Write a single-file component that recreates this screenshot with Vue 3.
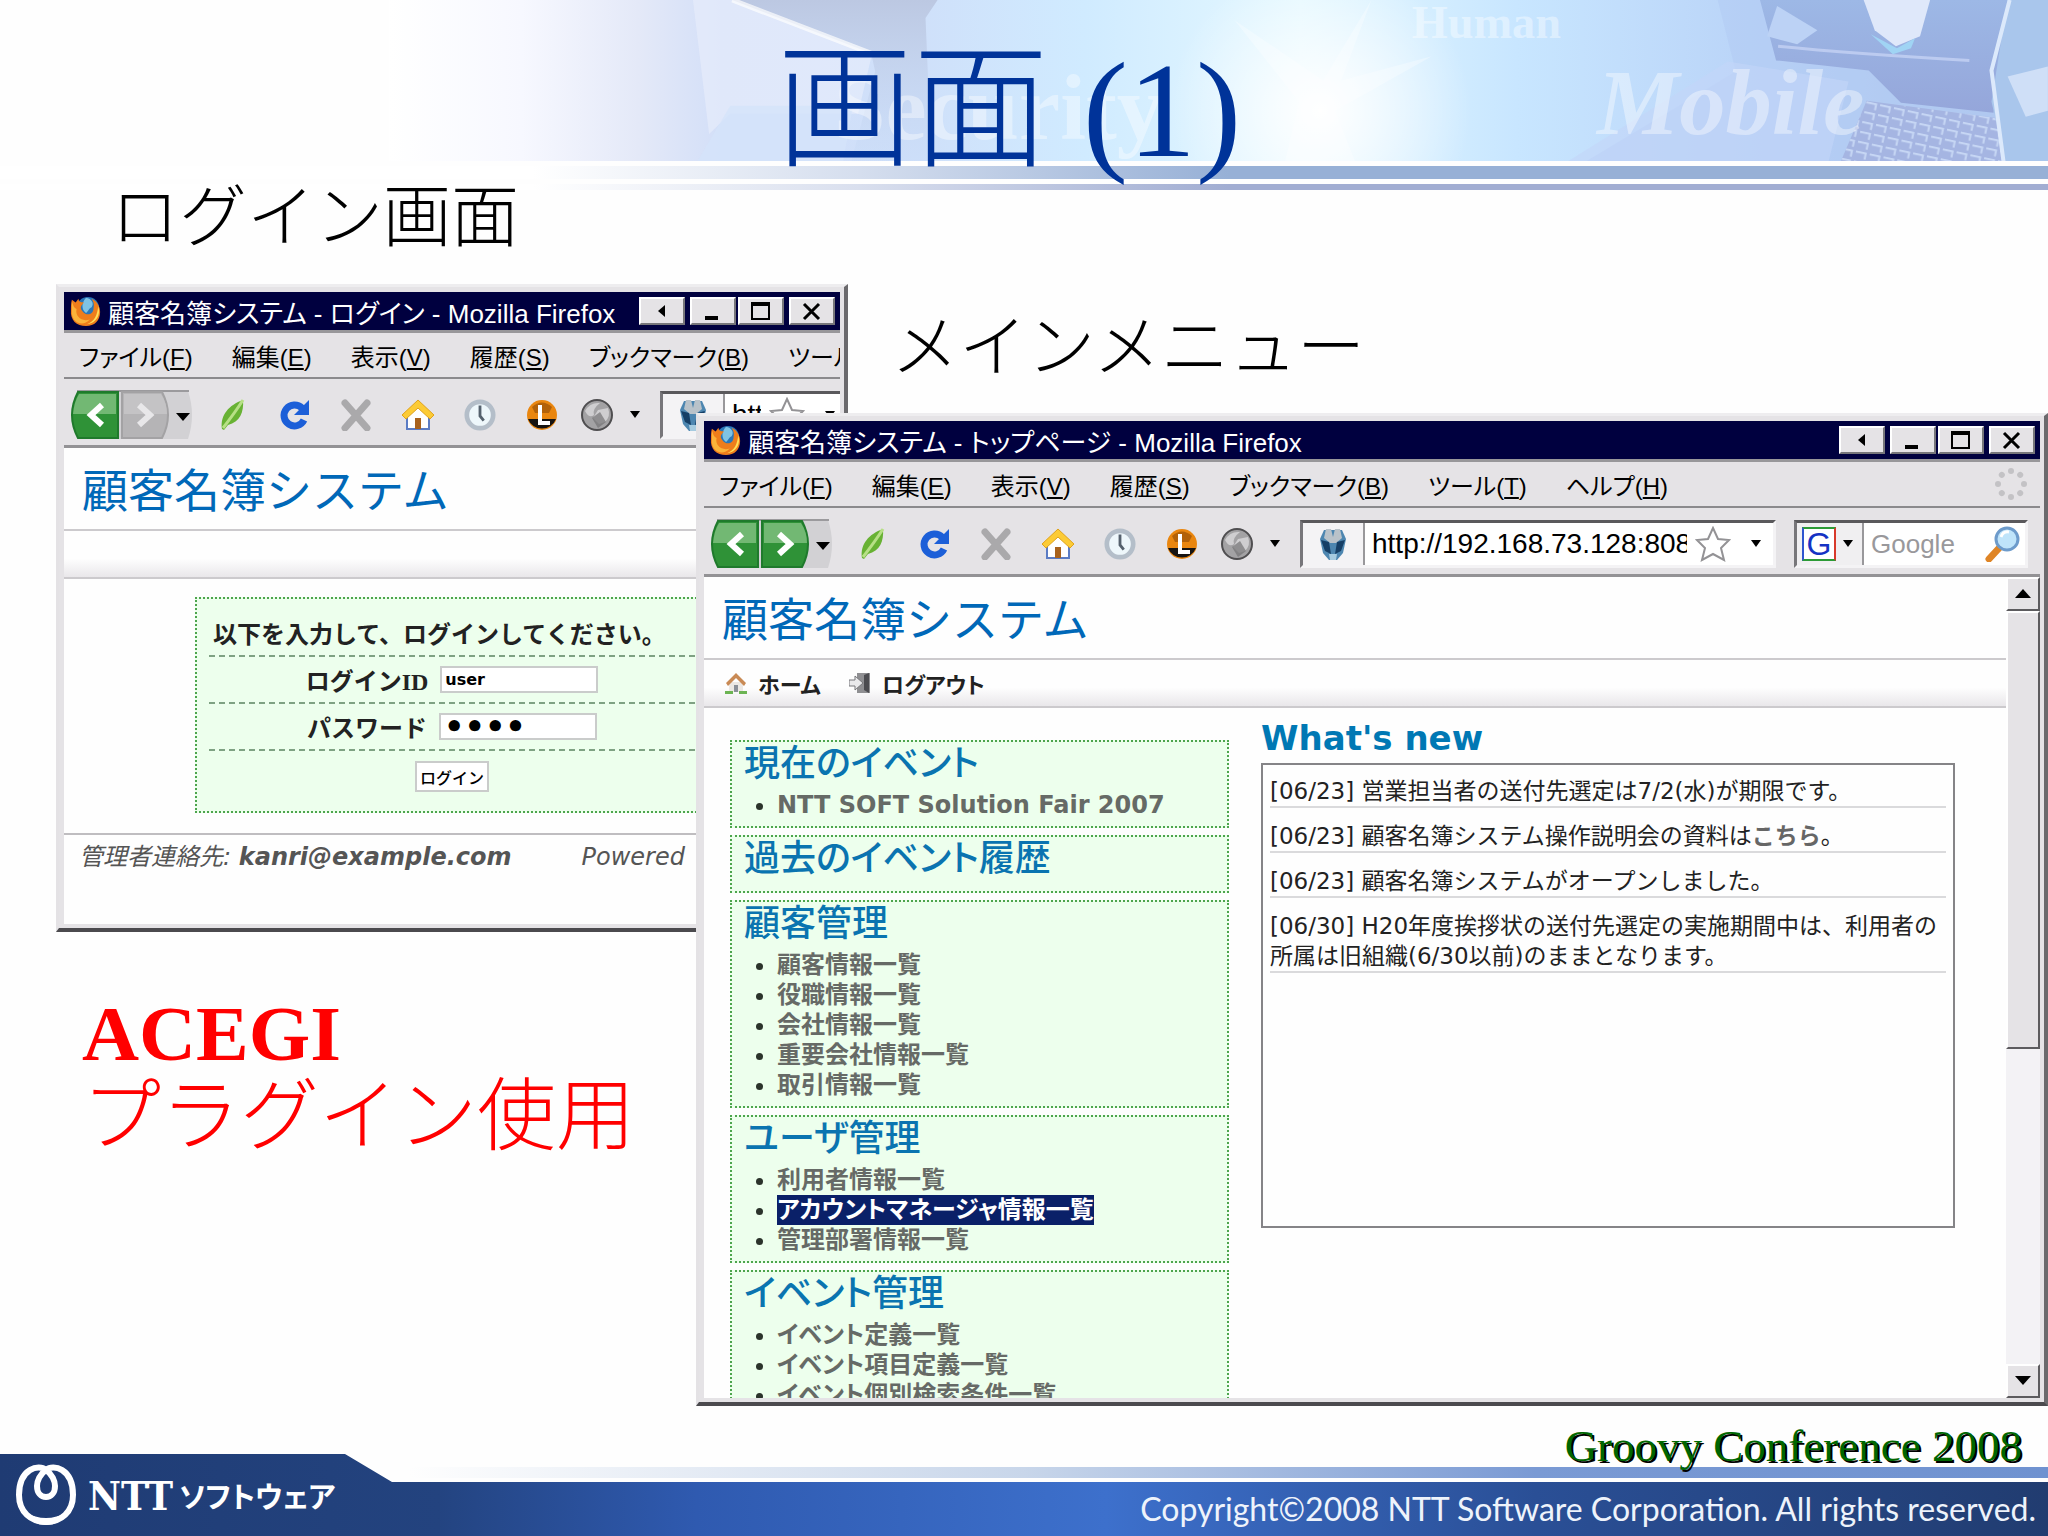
<template>
  <div class="slide">
    <header class="banner">
      <svg class="banner-art" viewBox="400 0 1648 161" preserveAspectRatio="xMaxYMin slice" aria-hidden="true">
        <defs>
          <linearGradient id="sky" x1="0" x2="1" y1="0" y2="0">
            <stop offset="0" stop-color="#ffffff" />
            <stop offset="0.08" stop-color="#f7f8ff" />
            <stop offset="0.15" stop-color="#e4e9f8" />
            <stop offset="0.2" stop-color="#d3dff8" />
            <stop offset="0.32" stop-color="#cfe0fa" />
            <stop offset="0.42" stop-color="#d0ebff" />
            <stop offset="0.55" stop-color="#e4f8ff" />
            <stop offset="0.68" stop-color="#c8e6ff" />
            <stop offset="0.82" stop-color="#bad4f8" />
            <stop offset="1" stop-color="#a9bfe8" />
          </linearGradient>
          <linearGradient id="coat" x1="0" x2="0" y1="0" y2="1">
            <stop offset="0" stop-color="#bcc8e2" />
            <stop offset="1" stop-color="#c9dcf8" stop-opacity="0.4" />
          </linearGradient>
          <linearGradient id="desk" x1="0" x2="0" y1="0" y2="1">
            <stop offset="0" stop-color="#9db8e6" />
            <stop offset="1" stop-color="#95a6da" />
          </linearGradient>
          <radialGradient id="flare">
            <stop offset="0" stop-color="#ffffff" />
            <stop offset="0.3" stop-color="#ffffff" stop-opacity="0.7" />
            <stop offset="1" stop-color="#ffffff" stop-opacity="0" />
          </radialGradient>
          <pattern id="keys" width="14" height="10" patternUnits="userSpaceOnUse" patternTransform="rotate(12)">
            <path d="M0 1h10v6" fill="none" stroke="#c6d6f4" stroke-width="2" />
          </pattern>
        </defs>
        <rect x="400" width="1648" height="161" fill="url(#sky)" />
        <path d="M702 0h40l138 53-14 60H739l-21 20z" fill="#e9effc" opacity="0.6" />
        <path d="M741 0h204l-12 18 6 143h-80l24-90-4-18z" fill="url(#coat)" />
        <path d="M741 0l138 53" stroke="#ffffff" stroke-width="5" opacity="0.7" />
        <path d="M739 105h122l-10 56H706z" fill="#d4e3fa" opacity="0.8" />
        <path d="M1720 0h328v161h-460l150-90z" fill="#b3cbf3" opacity="0.6" />
        <path d="M1762 0h248l-16 112-92-10-32-32-92-10z" fill="url(#desk)" />
        <path d="M1865 0h66l-10 36-24 10-21-16z" fill="#dfe8fa" />
        <path d="M1779 6l40 24-20 14-30-8z" fill="#bcd2f5" />
        <path d="M1872 34l26 14 18-10-4 10-18 6z" fill="#a0d4f4" />
        <path d="M1780 46c40 4 120 10 190 14" fill="none" stroke="#bccbf0" stroke-width="3" />
        <path d="M1868 100l134 18v43h-160z" fill="#a5b5e2" />
        <path d="M1868 100l134 18v43h-160z" fill="url(#keys)" />
        <path d="M2008 0h40v161h-42l-14-60z" fill="#a9c6ec" />
        <path d="M2010 0l-18 70 12 91" fill="none" stroke="#dce9fb" stroke-width="4" />
        <path d="M2008 76l40-10v44l-22 6z" fill="#cfdff7" />
        <path d="M1570 161l160-100 120 20-20 80z" fill="#c3d5f8" opacity="0.6" />
        <ellipse cx="1325" cy="110" rx="150" ry="150" fill="url(#flare)" />
        <path d="M1240 20l88 60 48-80-30 80 90-24-96 54 20 51h-70l14-60z" fill="#ffffff" opacity="0.3" />
        <text class="word word-security" x="842" y="138">Security</text>
        <text class="word word-human" x="1416" y="38">Human</text>
        <text class="word word-mobile" x="1600" y="133">Mobile</text>
      </svg>
      <div class="stripe stripe-wide"></div>
      <div class="stripe stripe-thin"></div>
      <h1 class="slide-title">画面 (1)</h1>
    </header>

    <main class="stage">
      <h2 class="caption caption-login">ログイン画面</h2>
      <h2 class="caption caption-menu">メインメニュー</h2>
      <p class="note"><strong>ACEGI</strong><br>プラグイン使用</p>

      <section v-for="win in windows" :key="win.id" class="window" :class="'window-' + win.id">
        <div class="titlebar">
          <svg class="fox" viewBox="0 0 34 34" aria-hidden="true">
            <circle cx="19" cy="14" r="12" fill="#2a76b8" />
            <path d="M17 3c6 1 9 6 6 10-3 1-3 4-6 6-5-3-5-11 0-16z" fill="#7fc3e4" />
            <path d="M2 5l4 3 3-4c0 3 2 4 6 4-3 3-5 5-2 9 4 6 12 4 12-3 1-4 0-7-2-10 5 2 9 8 9 14 0 9-6 15-15 15C7 33 0 27 1 16c0-4 0-7 1-11z" fill="#ee7d1b" />
            <path d="M2 7c2 4 1 6 5 8-2 8 6 14 14 11-7 8-18 4-19-6z" fill="#fbb33a" />
            <path d="M30 12c3 9-2 18-12 19 8-3 11-9 12-19z" fill="#ffe15a" />
          </svg>
          <span class="window-title">{{ win.title }}</span>
          <div class="controls">
            <button type="button" aria-label="shade"><svg viewBox="0 0 40 24"><path d="M24 6v12l-7-6z" /></svg></button>
            <button type="button" class="apart" aria-label="minimize"><svg viewBox="0 0 40 24"><path d="M13 17h13v4H13z" /></svg></button>
            <button type="button" aria-label="maximize"><svg viewBox="0 0 40 24"><path d="M11 3h19v18H11zM13 7v12h15V7z" fill-rule="evenodd" /></svg></button>
            <button type="button" class="apart" aria-label="close"><svg viewBox="0 0 40 24"><path d="M13 5l15 15M28 5L13 20" stroke="#000" stroke-width="3" /></svg></button>
          </div>
        </div>

        <nav class="menubar">
          <a v-for="item in menus" :key="item.key" href="#">{{ item.label }}(<u>{{ item.key }}</u>)</a>
          <svg v-if="win.id === 'main'" class="throbber" viewBox="0 0 34 34" aria-hidden="true">
            <g fill="#c3c2c5">
              <circle v-for="angle in dots" :key="angle" cx="17" cy="4" r="3" :transform="'rotate(' + angle + ' 17 17)'" />
            </g>
          </svg>
        </nav>

        <div class="toolbar">
          <svg class="history" viewBox="0 0 126 50" aria-hidden="true">
            <path d="M8 1h110q8 24 0 48H8Q-6 25 8 1z" fill="#d2d1d4" />
            <path d="M7 1h112" stroke="#9b9a9d" stroke-width="2" />
            <path d="M8 2h40v46H8Q-4 25 8 2z" fill="#2f9237" stroke="#1f7a2c" stroke-width="2" />
            <path d="M9 4h37v20H3Q4 12 9 4z" fill="#72b873" />
            <path d="M52 2h40q12 23 0 46H52z" :fill="win.forward ? '#2f9237' : '#b5b4b6'" :stroke="win.forward ? '#1f7a2c' : '#a3a2a4'" stroke-width="2" />
            <path d="M54 4h37q6 9 6 20H54z" :fill="win.forward ? '#72b873' : '#c4c3c5'" />
            <path d="M32 15L21 25l11 10" fill="none" stroke="#fff" stroke-width="6" />
            <path d="M69 15l11 10-11 10" fill="none" :stroke="win.forward ? '#fff' : '#e8e7e9'" stroke-width="6" />
            <path d="M106 23h14l-7 8z" />
          </svg>
          <svg class="tool leaf" viewBox="0 0 32 32" aria-hidden="true">
            <path d="M27 1c1 12-3 22-15 25l-4 5-2-1C4 16 13 6 27 1z" fill="#68b234" />
            <path d="M27 1C20 12 14 20 7 29" fill="none" stroke="#b7e086" stroke-width="3" />
          </svg>
          <svg class="tool" viewBox="0 0 32 32" aria-hidden="true">
            <path d="M24 9a10.500 10.500 0 1 0 2 12" fill="none" stroke="#1c5fd8" stroke-width="7" />
            <path d="M31 1v15H16z" fill="#1c5fd8" />
          </svg>
          <svg class="tool" viewBox="0 0 32 32" aria-hidden="true">
            <path d="M5 4l22 25M27 4L5 29" stroke="#aaa9ab" stroke-width="7" stroke-linecap="round" />
          </svg>
          <svg class="tool" viewBox="0 0 32 32" aria-hidden="true">
            <path d="M5 15L16 5l11 10v15H5z" fill="#fff" stroke="#5b7cc4" stroke-width="2" />
            <path d="M16 1l16 15-4 4L16 9 4 20l-4-4z" fill="#fccb35" stroke="#dfa21c" />
            <path d="M13 19h6v11h-6z" fill="#a8621d" />
          </svg>
          <svg class="tool" viewBox="0 0 34 34" aria-hidden="true">
            <circle cx="17" cy="17" r="14" fill="#eef7fb" stroke="#b4bec9" stroke-width="5" />
            <path d="M17 7v11l4 5" fill="none" stroke="#55616d" stroke-width="3" />
          </svg>
          <svg class="tool" viewBox="0 0 32 32" aria-hidden="true">
            <circle cx="16" cy="16" r="15" fill="#e9860f" />
            <path d="M2 20h28a15 15 0 0 1-28 0z" fill="#161412" />
            <path d="M6 8q10-9 20 0l-3 6H9z" fill="#8d4a05" opacity="0.6" />
            <path d="M14 6v18h10" fill="none" stroke="#fff" stroke-width="4" />
          </svg>
          <svg class="tool orb" viewBox="0 0 34 34" aria-hidden="true">
            <circle cx="17" cy="17" r="15" fill="#a3a2a4" stroke="#4f4e50" stroke-width="2" />
            <path d="M5 13Q10 4 20 5q-8 6-6 12-5 4-9-4zM18 12l10-2q3 8-3 14l-6 2-6-6z" fill="#cfced0" />
            <path d="M12 20l8-6 6 10-8 6z" fill="#747375" opacity="0.7" />
          </svg>
          <svg class="drop" viewBox="0 0 10 8" aria-hidden="true"><path d="M0 0h10L5 7z" /></svg>

          <div class="urlbox">
            <span class="favicon">
              <svg viewBox="0 0 30 34" aria-hidden="true">
                <path d="M6 3h18l4 9-3 14-6 7h-8l-6-7-3-14z" fill="#4d86b0" />
                <path d="M8 2h5l2 8 2-8h5l2 9-6 5h-6l-6-5z" fill="#b9c2c9" />
                <path d="M3 13l8 2 2 12-6-3zM27 13l-8 2-2 12 6-3z" fill="#163f66" />
                <path d="M11 27h8l-1 6h-6z" fill="#a6cbe0" />
              </svg>
            </span>
            <input class="url" type="text" aria-label="URL" value="http://192.168.73.128:8080">
            <svg class="star" viewBox="0 0 36 36" aria-hidden="true"><path d="M18 2l5 11 11 1-8 8 3 12-11-6-11 6 3-12-8-8 11-1z" fill="#fff" stroke="#939295" stroke-width="2" /></svg>
            <svg class="drop" viewBox="0 0 10 8" aria-hidden="true"><path d="M0 0h10L5 7z" /></svg>
          </div>

          <div v-if="win.id === 'main'" class="searchbox">
            <span class="engine">
              <span class="engine-logo">G</span>
              <svg class="drop" viewBox="0 0 10 8" aria-hidden="true"><path d="M0 0h10L5 7z" /></svg>
            </span>
            <input type="text" class="search" placeholder="Google" aria-label="Google">
            <svg class="lens" viewBox="0 0 36 36" aria-hidden="true">
              <path d="M4 33l12-13" stroke="#df8526" stroke-width="7" stroke-linecap="round" />
              <circle cx="22" cy="13" r="11" fill="#bfe4fa" stroke="#6d9bcb" stroke-width="3" />
              <path d="M16 11q2-6 8-5" fill="none" stroke="#fff" stroke-width="3" />
            </svg>
          </div>
        </div>

        <div class="viewport">
          <div class="page">
            <div class="site-name">顧客名簿システム</div>
            <div class="site-nav">
              <template v-if="win.id === 'main'">
                <a href="#">
                  <svg viewBox="0 0 22 22" aria-hidden="true">
                    <path d="M4 10h14v10H4z" fill="#ece8e4" />
                    <path d="M11 1l10 10-2 3-8-8-8 8-2-3z" fill="#c98a55" />
                    <path d="M9 13h4v7H9z" fill="#8b9099" />
                    <path d="M0 19h8v3H0zM14 19h8v3h-8z" fill="#6cb453" />
                  </svg>ホーム</a>
                <a href="#">
                  <svg viewBox="0 0 22 22" aria-hidden="true">
                    <path d="M8 1h13v20H8z" fill="#8f8f92" />
                    <path d="M15 3l5-2v20l-5-3z" fill="#4c4c50" />
                    <path d="M0 8h6V4l8 7-8 7v-4H0z" fill="#e9e9eb" stroke="#77777a" />
                  </svg>ログアウト</a>
              </template>
            </div>

            <template v-if="win.id === 'login'">
              <form class="login" @submit.prevent>
                <div class="login-lead">以下を入力して、ログインしてください。</div>
                <div class="login-row">
                  <label for="login-id">ログイン<span class="latin">ID</span></label>
                  <input id="login-id" v-model="loginId" type="text">
                </div>
                <div class="login-row">
                  <label for="password">パスワード</label>
                  <input id="password" v-model="password" type="password">
                </div>
                <div class="login-submit"><button type="submit">ログイン</button></div>
              </form>
              <div class="page-footer">
                <span>管理者連絡先: <a href="#">kanri@example.com</a></span>
                <span>Powered</span>
              </div>
            </template>

            <div v-else class="columns">
              <div class="side">
                <section v-for="group in groups" :key="group.title" class="group">
                  <h3>{{ group.title }}</h3>
                  <ul>
                    <li v-for="link in group.links" :key="link">
                      <a href="#" :class="{ selected: link === selected }">{{ link }}</a>
                    </li>
                  </ul>
                </section>
              </div>
              <div class="news">
                <h3>What's new</h3>
                <ul>
                  <li v-for="(item, i) in news" :key="i">
                    [{{ item.date }}] {{ item.text }}<template v-if="item.link"><a href="#">{{ item.link }}</a>。</template>
                  </li>
                </ul>
              </div>
            </div>
          </div>

          <div v-if="win.id === 'main'" class="scrollbar">
            <button type="button" aria-label="scroll up"><svg viewBox="0 0 16 10"><path d="M8 0l8 9H0z" /></svg></button>
            <div class="thumb"></div>
            <div class="track"></div>
            <button type="button" aria-label="scroll down"><svg viewBox="0 0 16 10"><path d="M0 0h16L8 9z" /></svg></button>
          </div>
        </div>
      </section>

      <p class="event">Groovy Conference 2008</p>
    </main>

    <footer class="footer">
      <div class="brand">
        <svg viewBox="0 0 62 62" aria-hidden="true">
          <path d="M31 6C24 0 4 4 4 31c0 17 12 27 27 27s27-10 27-27C58 4 38 0 31 6c-6 4-9 11-9 16 0 7 4 11 9 11s9-4 9-11c0-5-3-12-9-16z" fill="none" stroke="#fff" stroke-width="6" />
          <path d="M10 48q21 12 42 0-7 13-21 13T10 48z" fill="#fff" />
        </svg>
        <span class="brand-latin">NTT</span><span class="brand-kana">ソフトウェア</span>
      </div>
      <div class="footer-stripe"></div>
      <div class="footer-bar">Copyright©2008 NTT Software Corporation. All rights reserved.</div>
    </footer>
  </div>
</template>

<script setup>
import { ref } from 'vue'

const loginId = ref('user')
const password = ref('pass')
const selected = ref('アカウントマネージャ情報一覧')

const windows = [
  { id: 'login', title: '顧客名簿システム - ログイン - Mozilla Firefox', forward: false },
  { id: 'main', title: '顧客名簿システム - トップページ - Mozilla Firefox', forward: true }
]

const menus = [
  { label: 'ファイル', key: 'F' },
  { label: '編集', key: 'E' },
  { label: '表示', key: 'V' },
  { label: '履歴', key: 'S' },
  { label: 'ブックマーク', key: 'B' },
  { label: 'ツール', key: 'T' },
  { label: 'ヘルプ', key: 'H' }
]

const dots = [0, 45, 90, 135, 180, 225, 270, 315]

const groups = [
  { title: '現在のイベント', links: ['NTT SOFT Solution Fair 2007'] },
  { title: '過去のイベント履歴', links: [] },
  { title: '顧客管理', links: ['顧客情報一覧', '役職情報一覧', '会社情報一覧', '重要会社情報一覧', '取引情報一覧'] },
  { title: 'ユーザ管理', links: ['利用者情報一覧', 'アカウントマネージャ情報一覧', '管理部署情報一覧'] },
  { title: 'イベント管理', links: ['イベント定義一覧', 'イベント項目定義一覧', 'イベント個別検索条件一覧'] }
]

const news = [
  { date: '06/23', text: '営業担当者の送付先選定は7/2(水)が期限です。' },
  { date: '06/23', text: '顧客名簿システム操作説明会の資料は', link: 'こちら' },
  { date: '06/23', text: '顧客名簿システムがオープンしました。' },
  { date: '06/30', text: 'H20年度挨拶状の送付先選定の実施期間中は、利用者の所属は旧組織(6/30以前)のままとなります。' }
]
</script>

<style>
body {
  margin: 0;
  background: #fefefe;
}
</style>

<style scoped>
.slide {
  display: flex;
  flex-direction: column;
  min-height: 100vh;
  overflow: hidden;
  font-family: "DejaVu Sans", "Noto Sans CJK JP", sans-serif;
}

h1, h2, h3, p, ul {
  margin: 0;
  padding: 0;
}

a {
  color: inherit;
  text-decoration: none;
}

button, input {
  font-family: inherit;
  box-sizing: border-box;
}

/* banner */
.banner {
  position: relative;
  height: 190px;
}

.banner-art {
  display: block;
  width: 81%;
  height: 161px;
  margin-left: auto;
}

.word {
  fill: #ffffff;
  font-family: "Liberation Serif", serif;
  font-weight: bold;
  opacity: 0.4;
}

.word-security {
  font-size: 92px;
}

.word-human {
  font-size: 46px;
}

.word-mobile {
  font-size: 92px;
  font-style: italic;
}

.stripe {
  margin-top: 5px;
}

.stripe-wide {
  height: 13px;
  background: linear-gradient(90deg, #fff 26%, #d5deee 42%, #97b0d6 60%);
}

.stripe-thin {
  height: 6px;
  background: linear-gradient(90deg, #fff 26%, #d9dfee 42%, #a1add2 60%);
}

.slide-title {
  position: absolute;
  inset: 0 30px auto 0;
  color: #003399;
  font-family: "Liberation Serif", "Noto Sans CJK JP", serif;
  font-size: 136px;
  font-weight: 300;
  line-height: 220px;
  text-align: center;
}

/* free canvas with captions and windows */
.stage {
  position: relative;
  flex: 1;
}

.caption {
  position: absolute;
  color: #000;
  font-family: "Noto Sans CJK JP", sans-serif;
  font-size: 68px;
  font-weight: 300;
  line-height: 80px;
  white-space: nowrap;
}

.caption-login {
  top: -18px;
  left: 111px;
}

.caption-menu {
  top: 112px;
  left: 891px;
}

.note {
  position: absolute;
  top: 802px;
  left: 82px;
  color: #ff0000;
  font-family: "Liberation Serif", "Noto Sans CJK JP", serif;
  font-size: 79px;
  font-weight: 300;
  line-height: 84px;
}

.note strong {
  font-weight: bold;
}

.event {
  position: absolute;
  right: 26px;
  bottom: -20px;
  z-index: 3;
  color: #006600;
  font-family: "Liberation Serif", serif;
  font-size: 45px;
  line-height: 56px;
  text-shadow: 2px 2px 0 #000;
}

.window {
  position: absolute;
  display: flex;
  flex-direction: column;
  box-sizing: border-box;
  padding: 5px 4px 4px 5px;
  background: #e5e3e6;
  border-style: solid;
  border-width: 3px 4px 4px 3px;
  border-color: #eeedef #6b6a6d #4b4a4e #e4e2e5;
}

.window-login {
  top: 94px;
  left: 56px;
  width: 792px;
  height: 648px;
}

.window-main {
  top: 223px;
  right: 0;
  bottom: 48px;
  left: 696px;
}

.titlebar {
  display: flex;
  align-items: center;
  flex: none;
  height: 38px;
  padding: 0 5px;
  background: #00003f;
  color: #fff;
}

.fox {
  width: 34px;
  height: 32px;
}

.window-title {
  flex: 1;
  margin-left: 5px;
  overflow: hidden;
  font-family: "Liberation Sans", "Noto Sans CJK JP", sans-serif;
  font-size: 26px;
  font-feature-settings: "palt";
  white-space: nowrap;
}

.controls {
  display: flex;
  gap: 2px;
}

.controls button {
  width: 46px;
  height: 28px;
  padding: 0;
  background: #e5e3e6;
  border: 2px solid;
  border-color: #fff #77767a #77767a #fff;
}

.controls .apart {
  margin-left: 3px;
}

.controls svg {
  display: block;
  width: 40px;
  height: 24px;
}

.menubar {
  display: flex;
  align-items: center;
  flex: none;
  gap: 39px;
  height: 44px;
  padding-left: 15px;
  overflow: hidden;
  border-top: 3px solid #98979a;
  border-bottom: 2px solid #8b8a8d;
  color: #000;
  font-family: "Liberation Sans", "Noto Sans CJK JP", sans-serif;
  font-size: 24px;
  font-feature-settings: "palt";
  white-space: nowrap;
}

.throbber {
  width: 34px;
  height: 34px;
  margin: 0 12px 0 auto;
}

.toolbar {
  display: flex;
  align-items: center;
  flex: none;
  height: 60px;
  padding: 6px 0 0 6px;
  overflow: hidden;
  border-bottom: 3px solid #939295;
}

.toolbar svg {
  flex: none;
}

.history {
  width: 126px;
  height: 50px;
}

.tool {
  width: 32px;
  height: 32px;
  margin-left: 30px;
}

.tool.leaf {
  margin-left: 20px;
}

.tool.orb {
  width: 34px;
  height: 34px;
  margin-left: 22px;
}

.drop {
  width: 10px;
  height: 8px;
}

.toolbar > .drop {
  margin: 0 20px 0 16px;
}

.urlbox, .searchbox {
  display: flex;
  align-items: center;
  box-sizing: border-box;
  height: 48px;
  background: #fff;
  border: 3px solid;
  border-color: #5a595c #f4f3f5 #f4f3f5 #77767a;
}

.urlbox {
  flex: 1 0 190px;
  min-width: 0;
  padding-right: 12px;
}

.favicon {
  display: flex;
  align-items: center;
  justify-content: center;
  flex: none;
  width: 60px;
  height: 100%;
  background: #f4f3f5;
  border-right: 2px solid #99989b;
}

.favicon svg {
  width: 30px;
  height: 34px;
}

.url, .search {
  min-width: 0;
  padding: 0;
  background: transparent;
  border: 0;
  color: #000;
  font-family: "Liberation Sans", sans-serif;
  font-size: 28px;
  line-height: 36px;
}

.url {
  flex: 1;
  width: 0;
  margin-left: 7px;
}

.star {
  width: 36px;
  height: 36px;
  margin: 0 20px 0 8px;
}

.searchbox {
  flex: none;
  width: 234px;
  margin: 0 12px 0 18px;
}

.engine {
  display: flex;
  align-items: center;
  flex: none;
  gap: 7px;
  width: 60px;
  height: 100%;
  padding-left: 5px;
  background: #f0eff1;
  border-right: 2px solid #99989b;
}

.engine-logo {
  box-sizing: border-box;
  width: 34px;
  height: 34px;
  background: #fff;
  border: 2px solid;
  border-color: #2c9b36 #d83a2b #2c9b36 #2f55cf;
  color: #1532c4;
  font-family: "Liberation Sans", sans-serif;
  font-size: 32px;
  line-height: 30px;
  text-align: center;
}

.search {
  width: 96px;
  margin-left: 7px;
  font-size: 26px;
}

.search::placeholder {
  color: #99989b;
  opacity: 1;
}

.lens {
  width: 36px;
  height: 36px;
  margin-left: 18px;
}

.viewport {
  display: flex;
  flex: 1;
  min-height: 0;
}

.page {
  flex: 1;
  min-width: 0;
  overflow: hidden;
  background: #fefefe;
}

.site-name {
  height: 81px;
  padding-left: 18px;
  border-bottom: 2px solid #cccacd;
  color: #0068b8;
  font-size: 46px;
  line-height: 86px;
}

.site-nav {
  display: flex;
  align-items: center;
  gap: 28px;
  height: 46px;
  padding-left: 21px;
  background: linear-gradient(#fefefe 60%, #e9e7ea);
  border-bottom: 2px solid #cccacd;
  color: #222;
  font-size: 22px;
  font-weight: bold;
  font-feature-settings: "palt";
}

.site-nav a {
  display: flex;
  align-items: center;
  gap: 11px;
}

.site-nav svg {
  width: 22px;
  height: 22px;
}

/* login page */
.login {
  box-sizing: border-box;
  width: 514px;
  height: 216px;
  margin: 18px auto 20px;
  padding: 14px 12px;
  background: #edffed;
  border: 2px dotted #4da54d;
  color: #222;
  font-size: 24px;
  font-weight: bold;
}

.login-lead, .login-row {
  display: flex;
  align-items: center;
  box-sizing: border-box;
  height: 47px;
  border-bottom: 2px dashed #7fa283;
}

.login-lead {
  height: 44px;
  padding: 0 0 4px 4px;
  white-space: nowrap;
}

.login-row {
  justify-content: center;
  gap: 12px;
}

.latin {
  font-family: "Liberation Serif", serif;
}

.login input {
  width: 158px;
  height: 27px;
  padding: 0 3px;
  background: #fff;
  border: 2px solid #cacccb;
  color: #000;
  font-size: 16px;
  font-weight: bold;
}

.login input[type="password"] {
  font-size: 32px;
}

.login-submit {
  display: flex;
  justify-content: center;
  padding-top: 10px;
}

.login-submit button {
  width: 74px;
  height: 31px;
  padding: 0;
  background: #fff;
  border: 2px solid #cacccb;
  color: #000;
  font-size: 16px;
  font-weight: 500;
}

.page-footer {
  display: flex;
  gap: 70px;
  padding: 8px 15px;
  border-top: 2px solid #bfbdc0;
  color: #555;
  font-size: 24px;
  font-style: italic;
  line-height: 28px;
  white-space: nowrap;
}

.page-footer a {
  font-weight: bold;
}

/* main page */
.columns {
  display: flex;
  gap: 32px;
}

.side {
  display: flex;
  flex-direction: column;
  gap: 7px;
  width: 499px;
  padding: 32px 0 0 26px;
  font-feature-settings: "palt";
}

.group {
  padding: 0 10px 6px 12px;
  background: #edffed;
  border: 2px dotted #4da54d;
}

.group h3 {
  margin-bottom: 4px;
  color: #0a74b0;
  font-size: 36px;
  font-weight: 500;
  line-height: 44px;
}

.group ul {
  padding-left: 33px;
}

.group li {
  height: 30px;
  color: #2b332b;
  font-size: 24px;
  line-height: 30px;
  white-space: nowrap;
}

.group a {
  display: inline-block;
  color: #666a66;
  font-weight: bold;
}

.group a.selected {
  background: #0a2068;
  color: #fff;
}

.news {
  flex: 1;
  margin-right: 51px;
}

.news h3 {
  margin-top: 8px;
  color: #0078b4;
  font-size: 34px;
  line-height: 44px;
}

.news ul {
  height: 450px;
  margin-top: 3px;
  padding: 11px 7px 0;
  border: 2px solid #858487;
  list-style: none;
}

.news li {
  margin-bottom: 13px;
  border-bottom: 2px solid #dadadc;
  color: #222;
  font-size: 23px;
  line-height: 30px;
}

.news a {
  color: #666;
  font-weight: bold;
}

.scrollbar {
  display: flex;
  flex-direction: column;
  flex: none;
  width: 34px;
  background: #f3f2f5;
}

.scrollbar button, .thumb {
  box-sizing: border-box;
  background: #e5e3e6;
  border: 2px solid;
  border-color: #fff #5c5b5e #5c5b5e #fff;
}

.scrollbar button {
  display: flex;
  align-items: center;
  justify-content: center;
  height: 34px;
  padding: 0;
}

.scrollbar svg {
  width: 16px;
  height: 10px;
}

.thumb {
  flex: 58;
}

.track {
  flex: 42;
}

/* footer */
.footer {
  position: relative;
  display: flex;
  flex-direction: column;
  height: 82px;
  background: #fefefe;
}

.brand {
  position: absolute;
  top: 0;
  left: 0;
  display: flex;
  align-items: center;
  box-sizing: border-box;
  width: 440px;
  height: 82px;
  padding-left: 15px;
  background: linear-gradient(90deg, #1f3b73, #23437f);
  clip-path: polygon(0 0, 345px 0, 392px 28px, 440px 28px, 440px 100%, 0 100%);
  color: #fff;
  font-weight: bold;
}

.brand svg {
  width: 62px;
  height: 62px;
}

.brand-latin {
  margin-left: 11px;
  font-family: "DejaVu Serif Condensed", "DejaVu Serif", serif;
  font-size: 40px;
}

.brand-kana {
  margin-left: 6px;
  font-family: "Noto Sans CJK JP", sans-serif;
  font-size: 29px;
  font-feature-settings: "palt";
}

.footer-stripe {
  height: 11px;
  margin: 13px 0 4px;
  background: linear-gradient(90deg, #fefefe 20%, #c8d6ea 50%, #7a9ad4 75%, #6f92d0);
}

.footer-bar {
  flex: 1;
  padding-right: 12px;
  background: linear-gradient(90deg, #23437f 21%, #2f5ab0 34%, #3d70cc 54%, #2a4f96 75%, #213c70);
  color: #eef3fb;
  font-family: Lato, sans-serif;
  font-size: 32px;
  line-height: 54px;
  text-align: right;
  white-space: nowrap;
}
</style>
